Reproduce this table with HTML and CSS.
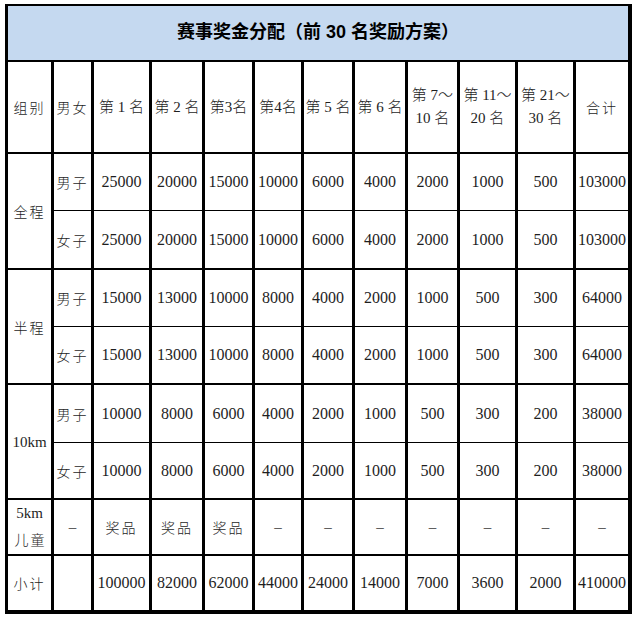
FILE: index.html
```html
<!DOCTYPE html>
<html lang="zh-CN">
<head>
<meta charset="utf-8">
<title>赛事奖金分配</title>
<link rel="stylesheet" href="styles.css">
</head>
<body>
<div class="sheet">
  <div class="cell title">赛事奖金分配（前 30 名奖励方案）</div>

  <div class="row head">
    <div class="cell cjk">组别</div>
    <div class="cell cjk">男女</div>
    <div class="cell">第 1 名</div>
    <div class="cell">第 2 名</div>
    <div class="cell">第3名</div>
    <div class="cell">第4名</div>
    <div class="cell">第 5 名</div>
    <div class="cell">第 6 名</div>
    <div class="cell two"><span>第 7～<br>10 名</span></div>
    <div class="cell two"><span>第 11～<br>20 名</span></div>
    <div class="cell two"><span>第 21～<br>30 名</span></div>
    <div class="cell cjk">合计</div>
  </div>

  <div class="row m">
    <div class="cell group cjk">全程</div>
    <div class="cell cjk">男子</div>
    <div class="cell">25000</div><div class="cell">20000</div><div class="cell">15000</div><div class="cell">10000</div><div class="cell">6000</div><div class="cell">4000</div><div class="cell">2000</div><div class="cell">1000</div><div class="cell">500</div><div class="cell">103000</div>
  </div>
  <div class="row f">
    <div class="cell cjk">女子</div>
    <div class="cell">25000</div><div class="cell">20000</div><div class="cell">15000</div><div class="cell">10000</div><div class="cell">6000</div><div class="cell">4000</div><div class="cell">2000</div><div class="cell">1000</div><div class="cell">500</div><div class="cell">103000</div>
  </div>

  <div class="row m">
    <div class="cell group cjk">半程</div>
    <div class="cell cjk">男子</div>
    <div class="cell">15000</div><div class="cell">13000</div><div class="cell">10000</div><div class="cell">8000</div><div class="cell">4000</div><div class="cell">2000</div><div class="cell">1000</div><div class="cell">500</div><div class="cell">300</div><div class="cell">64000</div>
  </div>
  <div class="row f">
    <div class="cell cjk">女子</div>
    <div class="cell">15000</div><div class="cell">13000</div><div class="cell">10000</div><div class="cell">8000</div><div class="cell">4000</div><div class="cell">2000</div><div class="cell">1000</div><div class="cell">500</div><div class="cell">300</div><div class="cell">64000</div>
  </div>

  <div class="row m">
    <div class="cell group km">10km</div>
    <div class="cell cjk">男子</div>
    <div class="cell">10000</div><div class="cell">8000</div><div class="cell">6000</div><div class="cell">4000</div><div class="cell">2000</div><div class="cell">1000</div><div class="cell">500</div><div class="cell">300</div><div class="cell">200</div><div class="cell">38000</div>
  </div>
  <div class="row f">
    <div class="cell cjk">女子</div>
    <div class="cell">10000</div><div class="cell">8000</div><div class="cell">6000</div><div class="cell">4000</div><div class="cell">2000</div><div class="cell">1000</div><div class="cell">500</div><div class="cell">300</div><div class="cell">200</div><div class="cell">38000</div>
  </div>

  <div class="row kids">
    <div class="cell km stack"><span>5km</span><span class="cjk">儿童</span></div>
    <div class="cell dash">–</div>
    <div class="cell cjk">奖品</div><div class="cell cjk">奖品</div><div class="cell cjk">奖品</div>
    <div class="cell dash">–</div><div class="cell dash">–</div><div class="cell dash">–</div><div class="cell dash">–</div><div class="cell dash">–</div><div class="cell dash">–</div><div class="cell dash">–</div>
  </div>

  <div class="row total">
    <div class="cell cjk">小计</div>
    <div class="cell"></div>
    <div class="cell">100000</div><div class="cell">82000</div><div class="cell">62000</div><div class="cell">44000</div><div class="cell">24000</div><div class="cell">14000</div><div class="cell">7000</div><div class="cell">3600</div><div class="cell">2000</div><div class="cell">410000</div>
  </div>
</div>
</body>
</html>
```

FILE: styles.css
```css
html, body {
  margin: 0;
  padding: 0;
  background: #ffffff;
}

body {
  padding: 4px 0 0 5px;
  font-family: "Liberation Serif", "Noto Sans CJK SC", serif;
  color: #1e1e1e;
}

.sheet {
  display: grid;
  width: 627px;
  box-sizing: border-box;
  grid-template-columns: 46px 40px 58px 53px 50px 49px 51px 53px 52px 58px 58px 56px;
  grid-template-rows: 56px 92px 57px 59px 57px 58px 58px 57px 56px 58px;
  border-top: 2px solid #000;
  border-left: 3px solid #000;
}

.row {
  display: contents;
}

.cell {
  box-sizing: border-box;
  border-right: 3px solid #000;
  border-bottom: 2px solid #000;
  display: flex;
  align-items: center;
  justify-content: center;
  text-align: center;
  font-size: 16px;
  line-height: 20px;
  white-space: nowrap;
  overflow: hidden;
}

.cell:last-child {
  border-right-width: 4px;
}

.title {
  grid-column: 1 / -1;
  border-right-width: 4px;
  background: #c5d9f0;
  font-family: "Liberation Sans", "Noto Sans CJK SC", sans-serif;
  font-weight: bold;
  font-size: 18px;
  color: #000;
  padding-bottom: 2px;
}

.head .cell {
  font-size: 15px;
  font-weight: 300;
}

.head .cjk {
  font-size: 14px;
  letter-spacing: 2px;
}

.two {
  line-height: 23px;
}

.cjk {
  font-family: "Noto Sans CJK SC", sans-serif;
  font-size: 14px;
  font-weight: 300;
  letter-spacing: 2px;
}

.head .two {
  font-size: 15px;
}

.km {
  font-size: 15px;
  line-height: 26px;
}

.stack {
  flex-direction: column;
  padding-bottom: 2px;
}

.stack .cjk {
  line-height: 26px;
  padding-left: 2px;
}

.group {
  grid-row: span 2;
}

.m .cell {
  border-bottom-width: 1px;
}

.m .cell.group {
  border-bottom-width: 2px;
}

.dash {
  font-size: 15px;
  color: #333;
}

.total .cell {
  border-bottom-width: 4px;
}
```
